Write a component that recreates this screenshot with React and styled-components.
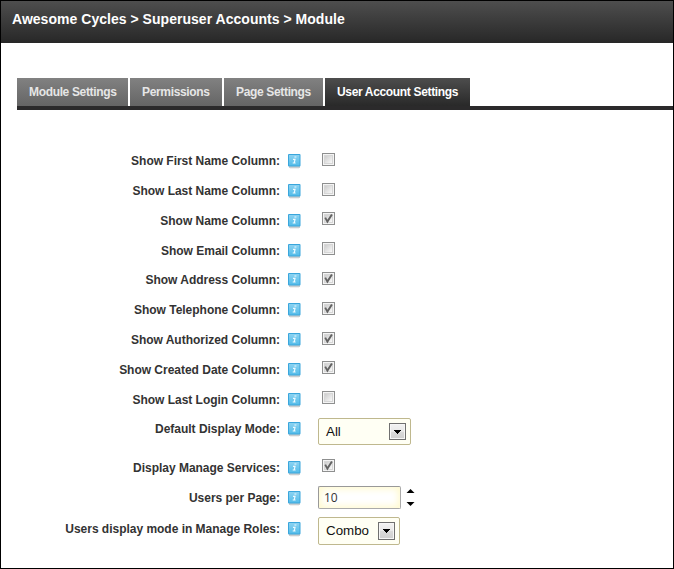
import React from "react";
import styled, { createGlobalStyle } from "styled-components";

const GlobalStyle = createGlobalStyle`
  * { box-sizing: border-box; }
  body { margin: 0; background: #fff; font-family: "Liberation Sans", Arial, sans-serif; }
`;

const Frame = styled.div`
  width: 674px;
  height: 569px;
  border: 1px solid #000;
  background: #fff;
  overflow: hidden;
`;

const Header = styled.header`
  height: 42px;
  padding: 9px 0 0 11px;
  background: linear-gradient(#4e4e4e, #272727);
`;

const Title = styled.h1`
  margin: 0;
  color: #fff;
  font-size: 14px;
  line-height: 18px;
  font-weight: bold;
  white-space: nowrap;
  letter-spacing: 0.03px;
`;

const Tabs = styled.nav`
  display: flex;
  gap: 2px;
  height: 32px;
  margin: 35px 0 0 16px;
  border-bottom: 4px solid #2b2a2b;
`;

const Tab = styled.a`
  width: ${(p) => p.$width}px;
  height: 28px;
  padding-left: 12px;
  line-height: 28px;
  font-size: 12px;
  font-weight: bold;
  white-space: nowrap;
  letter-spacing: -0.34px;
  color: ${(p) => (p.$active ? "#fff" : "#e6e6e6")};
  background: ${(p) =>
    p.$active ? "linear-gradient(#4d4d4d, #292929)" : "linear-gradient(#818181, #656565)"};
`;

const Form = styled.form`
  padding-top: 44px;
`;

const Row = styled.div`
  display: grid;
  grid-template-columns: 279px 8px 13px 17px auto;
  align-items: start;
  height: ${(p) => p.$height}px;
`;

const Label = styled.label`
  grid-column: 1;
  text-align: right;
  font-size: 12px;
  line-height: 14px;
  font-weight: bold;
  color: #333;
  white-space: nowrap;
  letter-spacing: -0.02px;
`;

const HelpSvg = styled.svg`
  grid-column: 3;
  display: block;
`;

const Control = styled.div`
  grid-column: 5;
  display: flex;
  margin-top: ${(p) => p.$shift}px;
`;

const CheckSvg = styled.svg`
  display: block;
  margin-left: 4px;
`;

const SelectBox = styled.div`
  display: flex;
  justify-content: space-between;
  width: ${(p) => p.$width}px;
  height: ${(p) => p.$height}px;
  padding: 4px 4px 0 7px;
  border: 1px solid #bfb88e;
  border-radius: 2px;
  background: #fffff4;
  color: #111;
  font-size: 13.33px;
  line-height: 17px;
`;

const NumberInput = styled.input`
  width: 83px;
  height: 23px;
  padding: 0 5px;
  border: 1px solid #aaa;
  border-color: #999 #aaa #aaa #999;
  border-radius: 2px;
  background: #fff;
  box-shadow: inset 0 0 7px 2px #fffacf;
  color: #333;
  font: 12px "Open Sans", sans-serif;
  outline: none;
`;

const SpinnerSvg = styled.svg`
  margin: 3px 0 0 5px;
`;

function Help() {
  return (
    <HelpSvg width="13" height="15" viewBox="0 0 13 15">
      <defs>
        <linearGradient id="helpFill" x1="0" y1="0" x2="0" y2="1">
          <stop offset="0" stopColor="#8bd2f1" />
          <stop offset="1" stopColor="#55bdea" />
        </linearGradient>
      </defs>
      <rect x="1" y="12" width="11" height="2" fill="#c9ced1" />
      <rect x="2" y="14" width="9" height="1" fill="#f0f0f0" />
      <rect x="0" y="0" width="12.5" height="12.6" rx="1" fill="#3aa6dc" />
      <rect x="1" y="1" width="10.5" height="10.5" fill="url(#helpFill)" />
      <path d="M6.4 3h2M5 5.4h2L6.2 9M4.7 9h2.9" fill="none" stroke="#eefaff" strokeWidth="1.2" />
    </HelpSvg>
  );
}

function Checkbox({ checked }) {
  return (
    <CheckSvg width="13" height="13" viewBox="0 0 13 13" role="checkbox" aria-checked={checked}>
      <defs>
        <linearGradient id="checkFill" x1="0" y1="0" x2="1" y2="1">
          <stop offset="0" stopColor="#cdcdcd" />
          <stop offset="1" stopColor="#f8f8f8" />
        </linearGradient>
      </defs>
      <rect x="0.5" y="0.5" width="12" height="12" fill="#f4f4f4" stroke="#8e8f8f" />
      <rect x="2" y="2" width="9" height="9" fill="#d6d6d6" />
      <rect x="3" y="3" width="7" height="7" fill="url(#checkFill)" />
      {checked && <path d="M3.2 5.6L5.4 9.6L9.9 2.4" fill="none" stroke="#626262" strokeWidth="1.9" />}
    </CheckSvg>
  );
}

function DropButton({ height }) {
  return (
    <svg width="17" height={height} viewBox={`0 0 17 ${height}`}>
      <defs>
        <linearGradient id="dropFill" x1="0" y1="0" x2="0" y2="1">
          <stop offset="0" stopColor="#f3f3f3" />
          <stop offset="0.5" stopColor="#e8e8e8" />
          <stop offset="0.51" stopColor="#dadada" />
          <stop offset="1" stopColor="#cecece" />
        </linearGradient>
      </defs>
      <rect x="0.5" y="0.5" width="16" height={height - 1} fill="url(#dropFill)" stroke="#707070" />
      <rect x="1.5" y="1.5" width="14" height={height - 3} fill="none" stroke="#f6f6f6" />
      <path d="M5 7h7v1h-1v1h-1v1h-1v1h-1v-1h-1v-1h-1v-1h-1z" fill="#000" />
    </svg>
  );
}

function Spinner() {
  return (
    <SpinnerSvg width="9" height="18" viewBox="0 0 9 18">
      <path d="M0.5 4L4.5 0L8.5 4zM0.5 13L4.5 17L8.5 13z" fill="#000" />
    </SpinnerSvg>
  );
}

const TABS = [
  { text: "Module Settings", width: 111 },
  { text: "Permissions", width: 92 },
  { text: "Page Settings", width: 99 },
  { text: "User Account Settings", width: 145, active: true },
];

const ROWS = [
  { label: "Show First Name Column:", height: 30, checked: false, shift: -1 },
  { label: "Show Last Name Column:", height: 30, checked: false, shift: -1 },
  { label: "Show Name Column:", height: 30, checked: true, shift: -2 },
  { label: "Show Email Column:", height: 29, checked: false, shift: -2 },
  { label: "Show Address Column:", height: 30, checked: true, shift: -1 },
  { label: "Show Telephone Column:", height: 30, checked: true, shift: -1 },
  { label: "Show Authorized Column:", height: 30, checked: true, shift: -1 },
  { label: "Show Created Date Column:", height: 30, checked: true, shift: -2 },
  { label: "Show Last Login Column:", height: 29, checked: false, shift: -2 },
  { label: "Default Display Mode:", height: 39, select: "All", width: 93, boxHeight: 27, shift: -4 },
  { label: "Display Manage Services:", height: 30, checked: true, shift: -2 },
  { label: "Users per Page:", height: 31, number: "10", shift: -5 },
  { label: "Users display mode in Manage Roles:", height: 30, select: "Combo", width: 82, boxHeight: 28, shift: -5 },
];

function Field({ row }) {
  if (row.select) {
    return (
      <SelectBox $width={row.width} $height={row.boxHeight}>
        <span>{row.select}</span>
        <DropButton height={row.boxHeight - 10} />
      </SelectBox>
    );
  }
  if (row.number) {
    return (
      <>
        <NumberInput defaultValue={row.number} />
        <Spinner />
      </>
    );
  }
  return <Checkbox checked={row.checked} />;
}

export default function App() {
  return (
    <>
      <GlobalStyle />
      <Frame>
        <Header>
          <Title>Awesome Cycles &gt; Superuser Accounts &gt; Module</Title>
        </Header>
        <Tabs>
          {TABS.map((t) => (
            <Tab key={t.text} $width={t.width} $active={t.active}>
              {t.text}
            </Tab>
          ))}
        </Tabs>
        <Form>
          {ROWS.map((row) => (
            <Row key={row.label} $height={row.height}>
              <Label>{row.label}</Label>
              <Help />
              <Control $shift={row.shift}>
                <Field row={row} />
              </Control>
            </Row>
          ))}
        </Form>
      </Frame>
    </>
  );
}
